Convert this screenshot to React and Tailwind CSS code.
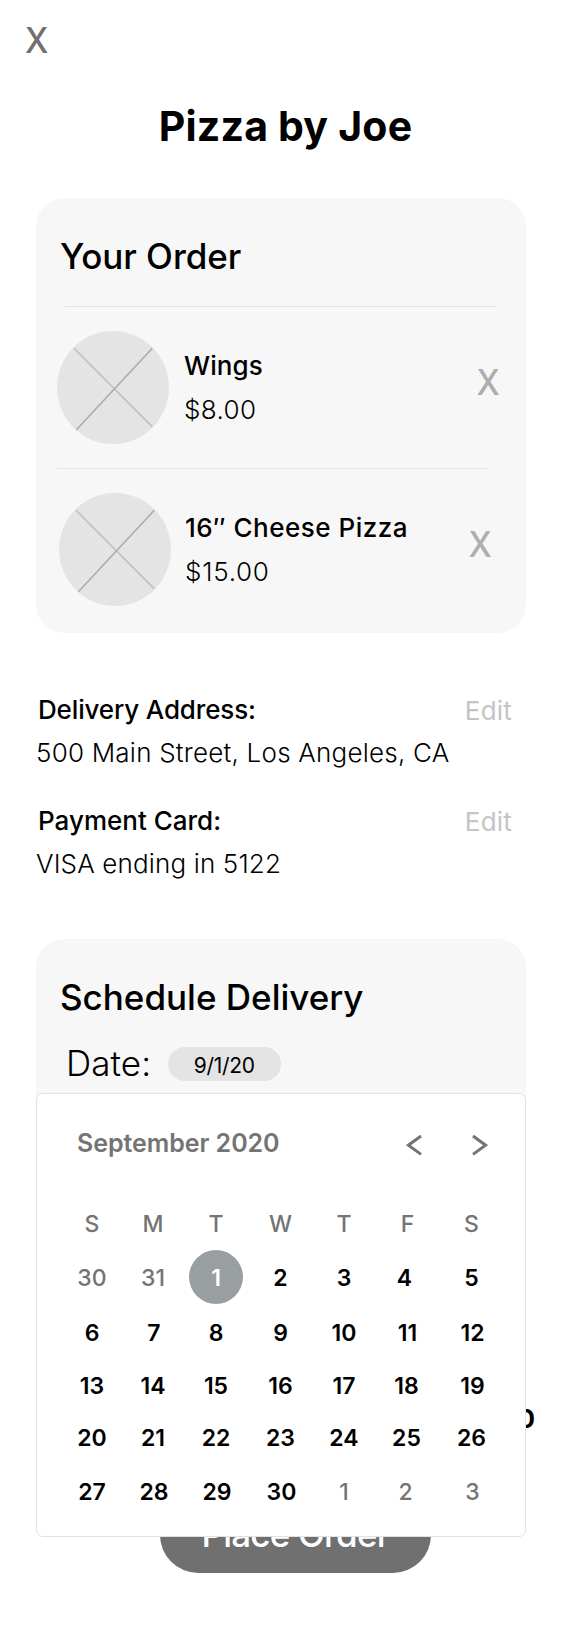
function PlaceholderImage() {
  return (
    <svg className="h-[113px] w-[112px] shrink-0" viewBox="0 0 112 113" fill="none">
      <ellipse cx="56" cy="56.5" rx="56" ry="56.5" fill="#e4e4e4" />
      <path d="M17 17.3 95.3 95.7" stroke="#bdbcbc" strokeWidth="1.4" />
      <path d="M95.3 17.3 19.4 98.7" stroke="#adabab" strokeWidth="1.6" />
    </svg>
  );
}

function Divider({ className }) {
  return <div className={`h-px w-[432px] bg-[#e2e2e2] ${className}`} />;
}

function OrderItem({ name, price, nameClass, priceClass, className }) {
  return (
    <div className={`flex h-[161px] items-center ${className}`}>
      <PlaceholderImage />
      <div className="ml-3.5 flex flex-col gap-3 text-[26px] leading-8">
        <span className={`font-medium ${nameClass}`}>{name}</span>
        <span className={`font-light ${priceClass}`}>{price}</span>
      </div>
      <button className="mb-3 ml-auto origin-center scale-x-95 text-[35px] leading-10 font-medium tracking-[-0.5px] text-[#b0adad]">X</button>
    </div>
  );
}

function Detail({ label, value, labelClass, valueClass }) {
  return (
    <div className="flex flex-col gap-[11px] text-[26px] leading-8">
      <div className="flex justify-between">
        <span className={`ml-0.5 font-medium ${labelClass}`}>{label}</span>
        <button className="mt-px -mb-px mr-[14px] tracking-[0.2px] text-[#c4c4c4]">Edit</button>
      </div>
      <span className={`font-light ${valueClass}`}>{value}</span>
    </div>
  );
}

const weekdays = ['S', 'M', 'T', 'W', 'T', 'F', 'S'];

const days = [
  { n: 30, muted: true }, { n: 31, muted: true }, { n: 1, selected: true }, { n: 2 }, { n: 3 }, { n: 4, nudge: '-translate-x-[3px]' }, { n: 5 },
  { n: 6 }, { n: 7, nudge: 'translate-x-px' }, { n: 8 }, { n: 9 }, { n: 10 }, { n: 11 }, { n: 12, nudge: 'translate-x-px' },
  { n: 13 }, { n: 14 }, { n: 15 }, { n: 16 }, { n: 17 }, { n: 18, nudge: '-translate-x-px' }, { n: 19, nudge: 'translate-x-px' },
  { n: 20 }, { n: 21 }, { n: 22 }, { n: 23 }, { n: 24 }, { n: 25, nudge: '-translate-x-px' }, { n: 26 },
  { n: 27 }, { n: 28, nudge: 'translate-x-px' }, { n: 29, nudge: 'translate-x-px' }, { n: 30, nudge: 'translate-x-px' }, { n: 1, muted: true }, { n: 2, muted: true, nudge: '-translate-x-[2px]' }, { n: 3, muted: true, nudge: 'translate-x-px' },
];

function Day({ n, muted, selected, nudge = '' }) {
  if (selected) {
    return (
      <span className="-mt-3 flex h-[54px] w-[54px] items-center justify-center rounded-full bg-[#999ea0] pt-0.5 font-semibold text-white">
        {n}
      </span>
    );
  }
  const tone = muted ? 'font-medium text-[#747474]' : 'font-semibold text-black';
  return <span className={`h-8 ${tone} ${nudge}`}>{n}</span>;
}

function Calendar() {
  return (
    <div className="absolute top-[1093px] left-9 h-[444px] w-[490px] rounded-[7px] border border-[#e2e2e2] bg-white">
      <div className="flex items-start pt-[33px] pl-10">
        <span className="text-[25px] leading-8 font-semibold tracking-[-0.05px] text-[#747474]">September 2020</span>
        <svg className="mt-[7px] ml-auto h-[22px] w-4" viewBox="0 0 16 22" fill="none" stroke="#747474" strokeWidth="3">
          <path d="M15 2 2.4 11.2 15 20.4" />
        </svg>
        <svg className="mt-[7px] mr-[37px] ml-[50px] h-[22px] w-4" viewBox="0 0 16 22" fill="none" stroke="#747474" strokeWidth="3">
          <path d="M1 2 13.6 11.2 1 20.4" />
        </svg>
      </div>
      <div className="mt-[49px] ml-6 grid grid-cols-[62px_60px_66px_63px_64px_63px_65px] grid-rows-[54px_55px_53px_52px_54px_32px] items-start justify-items-center text-[23px] leading-8">
        {weekdays.map((d, i) => (
          <span key={i} className="font-medium text-[#747474]">{d}</span>
        ))}
        {days.map((d, i) => (
          <Day key={i} {...d} />
        ))}
      </div>
    </div>
  );
}

export default function App() {
  return (
    <div className="relative flex h-[1644px] w-[563px] flex-col overflow-hidden bg-white font-['Inter',sans-serif] text-black">
      <button className="mt-5 ml-[25px] origin-left scale-x-95 self-start text-[35px] leading-10 font-medium tracking-[-0.5px] text-[#707070]">X</button>
      <h1 className="mt-[41px] pl-2 text-center text-[41px] leading-[50px] font-bold tracking-[0.2px]">Pizza by Joe</h1>

      <section className="mt-[47px] ml-9 h-[435px] w-[490px] shrink-0 rounded-[28px] bg-[#f7f7f7] pt-[38px]">
        <h2 className="pl-6 text-[35px] leading-10 font-medium tracking-[-0.05px]">Your Order</h2>
        <Divider className="mt-[30px] ml-[29px]" />
        <OrderItem
          name="Wings"
          price="$8.00"
          nameClass="ml-px tracking-[0.1px]"
          priceClass="ml-px tracking-[0.4px]"
          className="pr-[26px] pl-[21px]"
        />
        <Divider className="ml-[21px]" />
        <OrderItem
          name="16″ Cheese Pizza"
          price="$15.00"
          nameClass="tracking-[0.5px]"
          priceClass="tracking-[0.75px]"
          className="pr-[34px] pl-[23px]"
        />
      </section>

      <section className="mt-[61px] ml-9 flex w-[490px] flex-col gap-9">
        <Detail
          label="Delivery Address:"
          value="500 Main Street, Los Angeles, CA"
          labelClass="tracking-[-0.15px]"
          valueClass="tracking-[0.22px]"
        />
        <Detail
          label="Payment Card:"
          value="VISA ending in 5122"
          labelClass=""
          valueClass="tracking-[0.15px]"
        />
      </section>

      <section className="mt-[59px] ml-9 h-[440px] w-[490px] shrink-0 rounded-[28px] bg-[#f7f7f7] pt-[38px]">
        <h2 className="pl-6 text-[35px] leading-10 font-medium">Schedule Delivery</h2>
        <div className="mt-[26px] flex items-start pl-[30px]">
          <span className="text-[35px] leading-10 font-light tracking-[0.1px]">Date:</span>
          <button className="mt-1 ml-[17px] h-[34px] w-[113px] rounded-full bg-[#e4e4e4] pr-px text-[21px] leading-[38px] tracking-[-0.3px]">9/1/20</button>
        </div>
      </section>

      <span className="mt-[24px] mr-7 self-end text-[26px] leading-8 font-bold">$23.00</span>
      <button className="mt-[60px] ml-[160px] h-[78px] w-[271px] shrink-0 rounded-[38px] bg-[#707070] text-[35px] leading-10 font-medium tracking-[-0.8px] text-white">
        Place Order
      </button>

      <Calendar />
    </div>
  );
}
